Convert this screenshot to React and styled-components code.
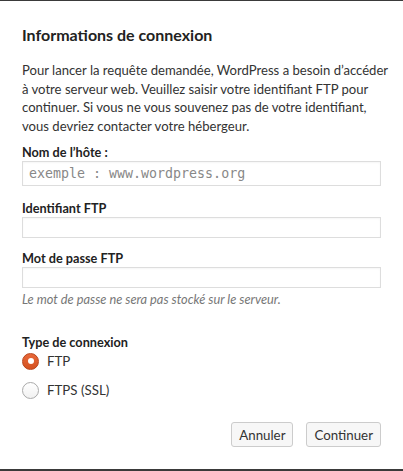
import styled, { createGlobalStyle } from "styled-components";

const GlobalStyle = createGlobalStyle`
	* { box-sizing: border-box; }
	body {
		margin: 0;
		background: #fff;
		font-family: Lato, "Open Sans", sans-serif;
		color: #333;
	}
`;

const Dialog = styled.div`
	width: 403px;
	height: 471px;
	background: #fff;
	border-top: 1px solid #3a3a3a;
	border-bottom: 2px solid #3a3a3a;
	padding: 23px 22px 0;
	display: flex;
	flex-direction: column;
`;

const Title = styled.h2`
	margin: 0;
	font-size: 16px;
	line-height: 22px;
	font-weight: 700;
	color: #222;
`;

const Intro = styled.p`
	margin: 15px 0 0;
	font-size: 13.1px;
	line-height: 18.5px;
	white-space: nowrap;
	color: #333;
`;

const Label = styled.label`
	display: block;
	margin-top: ${(p) => p.$gap}px;
	font-size: 12.7px;
	line-height: 18px;
	font-weight: 700;
	color: #222;
`;

const Input = styled.input`
	display: block;
	width: 100%;
	height: ${(p) => p.$h}px;
	margin: 0;
	padding: 0 6px;
	border: 1px solid #ddd;
	box-shadow: inset 0 1px 2px rgba(0, 0, 0, 0.04);
	background: #fff;
	font-family: "DejaVu Sans Mono", "Liberation Mono", monospace;
	font-size: 13.3px;
	color: #333;
	outline: none;
	&::placeholder {
		color: #888;
	}
`;

const Hint = styled.p`
	margin: 3px 0 0;
	font-size: 12.8px;
	line-height: 16px;
	font-style: italic;
	color: #777;
`;

const Fieldset = styled.div`
	margin-top: 26px;
	display: flex;
	flex-direction: column;
	gap: 9px;
`;

const Legend = styled.div`
	font-size: 12.7px;
	line-height: 18px;
	font-weight: 700;
	color: #222;
	margin-bottom: -9px;
`;

const Option = styled.label`
	display: flex;
	align-items: center;
	gap: 8px;
	height: 20px;
	font-size: 13.3px;
	color: #333;
`;

const Radio = styled.span`
	width: 17px;
	height: 17px;
	border-radius: 50%;
	flex: none;
	display: flex;
	align-items: center;
	justify-content: center;
	border: 1px solid ${(p) => (p.$on ? "#b8441b" : "#aaa")};
	background: ${(p) =>
		p.$on
			? "linear-gradient(#e8683a, #d4511f)"
			: "linear-gradient(#fff, #f1f1f1)"};
	&::after {
		content: "";
		display: ${(p) => (p.$on ? "block" : "none")};
		width: 6px;
		height: 6px;
		border-radius: 50%;
		background: #fff;
	}
`;

const Actions = styled.div`
	margin-top: 22px;
	display: flex;
	justify-content: flex-end;
	gap: 13px;
`;

const Button = styled.button`
	height: 25px;
	padding: 0 7px;
	border: 1px solid #ccc;
	border-radius: 3px;
	background: #f7f7f7;
	font-family: inherit;
	font-size: 13.3px;
	color: #333;
`;

export default function App() {
	return (
		<>
			<GlobalStyle />
			<Dialog>
				<Title>Informations de connexion</Title>
				<Intro>
					Pour lancer la requête demandée, WordPress a besoin d’accéder
					<br />à votre serveur web. Veuillez saisir votre identifiant FTP pour
					<br />continuer. Si vous ne vous souvenez pas de votre identifiant,
					<br />vous devriez contacter votre hébergeur.
				</Intro>
				<Label $gap={8}>Nom de l’hôte :</Label>
				<Input $h={25} placeholder="exemple : www.wordpress.org" />
				<Label $gap={13}>Identifiant FTP</Label>
				<Input $h={21} />
				<Label $gap={11}>Mot de passe FTP</Label>
				<Input $h={21} type="password" />
				<Hint>Le mot de passe ne sera pas stocké sur le serveur.</Hint>
				<Fieldset>
					<Legend>Type de connexion</Legend>
					<Option>
						<Radio $on />
						FTP
					</Option>
					<Option>
						<Radio />
						FTPS (SSL)
					</Option>
				</Fieldset>
				<Actions>
					<Button>Annuler</Button>
					<Button>Continuer</Button>
				</Actions>
			</Dialog>
		</>
	);
}
